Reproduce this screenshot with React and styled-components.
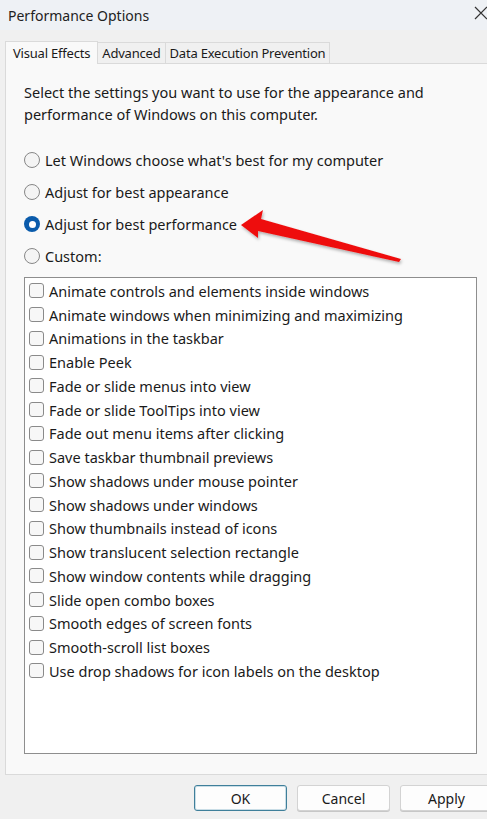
import React from "react";
import styled, { createGlobalStyle } from "styled-components";

const Global = createGlobalStyle`
  html, body { margin: 0; padding: 0; }
  body {
    background: #f0f0f0;
    font-family: "Noto Sans", "Open Sans", sans-serif;
    color: #1a1a1a;
    overflow: hidden;
  }
`;

const Window = styled.div`
  position: relative;
  width: 487px;
  height: 819px;
  overflow: hidden;
  background: #f0f0f0;
  display: flex;
  flex-direction: column;
`;

const TitleBar = styled.div`
  height: 30px;
  background: #eef1f5;
  display: flex;
  align-items: center;
  justify-content: space-between;
  padding-left: 8px;
  font-size: 14px;
  color: #222;
`;

const CloseBtn = styled.div`
  width: 20px;
  height: 30px;
  display: flex;
  align-items: center;
  justify-content: flex-end;
  padding: 0 0 4px 0;
  margin-right: -1px;
  box-sizing: border-box;
`;

const TabRow = styled.div`
  display: flex;
  align-items: flex-end;
  padding-left: 5px;
  margin-top: 10px;
  height: 23px;
`;

const Tab = styled.div`
  height: ${(p) => (p.$active ? "23px" : "21px")};
  box-sizing: border-box;
  padding: 0 ${(p) => (p.$active ? "7px" : "4px")};
  display: flex;
  align-items: center;
  font-size: 13px;
  letter-spacing: -0.2px;
  background: ${(p) => (p.$active ? "#f9f9f9" : "#f0f0f0")};
  border: 1px solid #dadada;
  border-bottom: none;
  margin-bottom: ${(p) => (p.$active ? "-1px" : "0")};
  position: relative;
  z-index: ${(p) => (p.$active ? 2 : 1)};
  & + & { margin-left: -1px; }
`;

const Panel = styled.div`
  margin-left: 5px;
  height: 712px;
  box-sizing: border-box;
  background: #f9f9f9;
  border: 1px solid #dadada;
  border-right: none;
  padding: 17px 10px 20px 18px;
  display: flex;
  flex-direction: column;
`;

const Description = styled.p`
  margin: 0;
  font-size: 14.5px;
  line-height: 22px;
  color: #1a1a1a;
`;

const RadioGroup = styled.div`
  display: flex;
  flex-direction: column;
  margin-top: 19px;
`;

const RadioRow = styled.label`
  display: flex;
  align-items: center;
  height: 32px;
  gap: 5px;
  font-size: 14.5px;
`;

const RadioDot = styled.span`
  width: 16px;
  height: 16px;
  box-sizing: border-box;
  border-radius: 50%;
  flex: none;
  border: ${(p) => (p.$checked ? "none" : "1px solid #878787")};
  background: ${(p) => (p.$checked ? "#0a5bab" : "#f4f4f4")};
  display: flex;
  align-items: center;
  justify-content: center;
  &::after {
    content: "";
    display: ${(p) => (p.$checked ? "block" : "none")};
    width: 7px;
    height: 7px;
    border-radius: 50%;
    background: #fff;
  }
`;

const ListBox = styled.div`
  margin-top: 5px;
  flex: 1;
  background: #fff;
  border: 1px solid #8e8e8e;
  padding: 1px 0 0 4px;
  display: flex;
  flex-direction: column;
`;

const CheckRow = styled.label`
  display: flex;
  align-items: center;
  height: 23.75px;
  gap: 5px;
  font-size: 14.5px;
  color: #1a1a1a;
`;

const CheckBox = styled.span`
  width: 15px;
  height: 15px;
  box-sizing: border-box;
  flex: none;
  border: 1px solid #8a8a8a;
  border-radius: 3px;
  background: #f7f7f7;
`;

const Footer = styled.div`
  display: flex;
  justify-content: flex-end;
  gap: 10px;
  margin-top: 10px;
  margin-right: -6px;
`;

const Button = styled.div`
  width: 93px;
  height: 26px;
  box-sizing: border-box;
  display: flex;
  align-items: center;
  justify-content: center;
  font-size: 14px;
  background: #fdfdfd;
  border: 1px solid ${(p) => (p.$default ? "#3f7f9a" : "#d3d3d3")};
  border-radius: 3px;
  box-shadow: ${(p) => (p.$default ? "inset 0 0 0 1px #c9dde6" : "0 1px 0 #c7c7c7")};
  color: #1a1a1a;
`;

const Arrow = styled.svg`
  position: absolute;
  left: 236px;
  top: 205px;
  width: 170px;
  height: 62px;
  pointer-events: none;
`;

const radios = [
  { label: "Let Windows choose what's best for my computer", checked: false },
  { label: "Adjust for best appearance", checked: false },
  { label: "Adjust for best performance", checked: true },
  { label: "Custom:", checked: false },
];

const effects = [
  "Animate controls and elements inside windows",
  "Animate windows when minimizing and maximizing",
  "Animations in the taskbar",
  "Enable Peek",
  "Fade or slide menus into view",
  "Fade or slide ToolTips into view",
  "Fade out menu items after clicking",
  "Save taskbar thumbnail previews",
  "Show shadows under mouse pointer",
  "Show shadows under windows",
  "Show thumbnails instead of icons",
  "Show translucent selection rectangle",
  "Show window contents while dragging",
  "Slide open combo boxes",
  "Smooth edges of screen fonts",
  "Smooth-scroll list boxes",
  "Use drop shadows for icon labels on the desktop",
];

export default function App() {
  return (
    <>
      <Global />
      <Window>
        <TitleBar>
          <span>Performance Options</span>
          <CloseBtn>
            <svg width="14" height="14" viewBox="0 0 14 14">
              <path d="M1 1 L13 13 M13 1 L1 13" stroke="#333" strokeWidth="1.2" fill="none" />
            </svg>
          </CloseBtn>
        </TitleBar>
        <TabRow>
          <Tab $active>Visual Effects</Tab>
          <Tab>Advanced</Tab>
          <Tab>Data Execution Prevention</Tab>
        </TabRow>
        <Panel>
          <Description>
            Select the settings you want to use for the appearance and
            <br />
            performance of Windows on this computer.
          </Description>
          <RadioGroup>
            {radios.map((r) => (
              <RadioRow key={r.label}>
                <RadioDot $checked={r.checked} />
                {r.label}
              </RadioRow>
            ))}
          </RadioGroup>
          <ListBox>
            {effects.map((e) => (
              <CheckRow key={e}>
                <CheckBox />
                {e}
              </CheckRow>
            ))}
          </ListBox>
        </Panel>
        <Footer>
          <Button $default>OK</Button>
          <Button>Cancel</Button>
          <Button>Apply</Button>
        </Footer>
        <Arrow viewBox="0 0 170 62">
          <defs>
            <filter id="sh" x="-10%" y="-30%" width="130%" height="160%">
              <feDropShadow dx="1" dy="2" stdDeviation="1.5" floodColor="#000" floodOpacity="0.3" />
            </filter>
          </defs>
          <path
            d="M5 20 L27 5 L25 14 L165 54 L163 57 L22 26 L22 33 Z"
            fill="#ee1111"
            filter="url(#sh)"
          />
        </Arrow>
      </Window>
    </>
  );
}
